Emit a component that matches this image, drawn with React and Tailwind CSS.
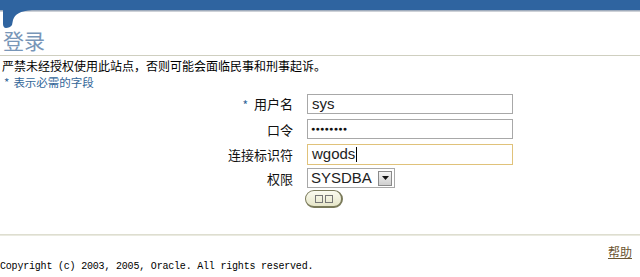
import React from "react";

const cjk = "font-['Noto_Sans_CJK_SC',sans-serif]";

const HeaderCorner = () => (
  <svg width="60" height="18" viewBox="0 0 60 18" className="block">
    <path
      d="M3 0 H32 C20 1 15 4 13 10 L12 15 C11 17 8 18 6 18 C4 18 3 16 3 14 Z"
      fill="#2f64a0"
    />
  </svg>
);

const Row = ({ label, required, children, className = "" }) => (
  <div className={`grid grid-cols-[293px_206px] gap-x-[14px] items-center ${className}`}>
    <div className={`text-right text-[13px] leading-none text-[#111] ${cjk}`}>
      {required && <span className="text-[#336699] text-[12px] mr-[6px] align-middle">*</span>}
      {label}
    </div>
    <div>{children}</div>
  </div>
);

export default function App() {
  return (
    <div className="w-[640px] h-[277px] bg-white overflow-hidden relative">
      {/* top band */}
      <div className="h-[10px] bg-[#2f64a0]" />
      <div className="h-[2px] bg-gradient-to-b from-[#8a9ab0] to-[#e4e4e4]" />
      <div className="-mt-[2px]">
        <HeaderCorner />
      </div>

      {/* title */}
      <div className="h-[28px] border-b border-[#cfcfc0] pl-[3px]">
        <h1 className={`text-[21px] leading-[25px] font-normal text-[#7896b8] ${cjk}`}>登录</h1>
      </div>

      <p className={`mt-[1px] pl-[2px] text-[12px] leading-[17px] text-black ${cjk}`}>
        严禁未经授权使用此站点，否则可能会面临民事和刑事起诉。
      </p>
      <p className={`pl-[4px] text-[11.5px] leading-[17px] text-[#336699] ${cjk}`}>
        <span className="mr-[4px]">*</span>表示必需的字段
      </p>

      {/* form */}
      <div className="mt-[3px]">
        <Row label="用户名" required>
          <div className="h-[20px] border border-[#a8a8a8] px-[4px] flex items-center text-[15px] font-['Liberation_Sans',sans-serif] text-[#222]">
            sys
          </div>
        </Row>
        <Row label="口令" className="mt-[5px]">
          <div className="h-[20px] border border-[#a8a8a8] px-[3px] flex items-center text-[7px] tracking-[0.3px] font-['Liberation_Sans',sans-serif] text-[#111]">
            ●●●●●●●●
          </div>
        </Row>
        <Row label="连接标识符" className="mt-[5px]">
          <div className="h-[21px] border border-[#e0c27a] px-[4px] flex items-center text-[15px] font-['Liberation_Sans',sans-serif] text-[#222]">
            wgods<span className="w-px h-[15px] bg-black ml-[1px]" />
          </div>
        </Row>
        <Row label="权限" className="mt-[3px]">
          <div className="w-[88px] h-[20px] border border-[#a8a8a8] flex items-center justify-between pl-[3px] pr-[2px] text-[15px] font-['Liberation_Sans',sans-serif] text-[#222]">
            SYSDBA
            <span className="w-[14px] h-[15px] border border-[#8a8a8a] bg-gradient-to-b from-[#f4f4f4] to-[#cfcfcf] flex items-center justify-center">
              <svg width="7" height="4" viewBox="0 0 7 4">
                <path d="M0 0 H7 L3.5 4 Z" fill="#111" />
              </svg>
            </span>
          </div>
        </Row>
        <Row label="" className="mt-[2px]">
          <button className="-ml-[2px] w-[38px] h-[18px] rounded-full border border-[#7a7a5a] border-r-2 border-b-2 bg-gradient-to-b from-[#fbfbf0] to-[#e6e6c8] flex items-center justify-center gap-[2px]">
            <span className="w-[8px] h-[8px] border border-[#777]" />
            <span className="w-[8px] h-[8px] border border-[#777]" />
          </button>
        </Row>
      </div>

      {/* footer */}
      <div className="mt-[26px] h-[2px] bg-gradient-to-b from-[#d8d8c8] to-[#f0f0e8]" />
      <div className="flex justify-end pr-[8px] mt-[9px]">
        <a className={`text-[12px] leading-[14px] text-[#6b5530] underline ${cjk}`}>帮助</a>
      </div>
      <p className="mt-[2px] text-[10px] leading-[12px] tracking-[-0.2px] text-black font-['Liberation_Mono',monospace]">
        Copyright (c) 2003, 2005, Oracle. All rights reserved.
      </p>
    </div>
  );
}
